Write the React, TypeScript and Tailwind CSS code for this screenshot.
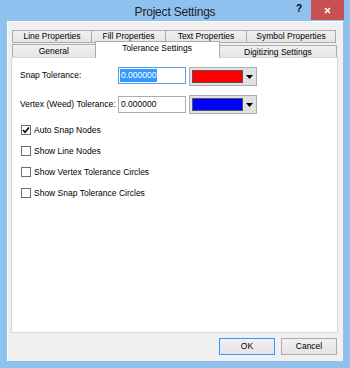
import React from "react";

const font = { fontFamily: '"Liberation Sans", Arial, sans-serif' };

function Tab({ label, w, h, selected, className = "" }: { label: string; w: string; h: string; selected?: boolean; className?: string }) {
  return (
    <div
      className={`${w} ${h} flex items-center justify-center text-[8.5px] leading-none text-black border border-[#acacac] ${
        selected ? "bg-white border-b-0 relative z-10" : "bg-gradient-to-b from-[#f0f0f0] to-[#e5e5e5]"
      } ${className}`}
    >
      {label}
    </div>
  );
}

function ColorPick({ color }: { color: string }) {
  return (
    <div className="w-[68px] h-[19px] border border-[#adadad] bg-[#e1e1e1] flex items-center pl-[2px] pr-[3px] gap-[3px]">
      <div className={`flex-1 h-[13px] border border-[#555] ${color}`} />
      <svg width="7" height="4" viewBox="0 0 7 4">
        <path d="M0 0 H7 L3.5 4 Z" fill="#000" />
      </svg>
    </div>
  );
}

function Check({ label, checked }: { label: string; checked?: boolean }) {
  return (
    <div className="flex items-center gap-[3px] h-[10px]">
      <div className="w-[10px] h-[10px] border border-[#707070] bg-white flex items-center justify-center">
        {checked && (
          <svg width="8" height="8" viewBox="0 0 8 8">
            <path d="M1 4 L3 6.3 L7 1.5" stroke="#000" strokeWidth="1.6" fill="none" />
          </svg>
        )}
      </div>
      <span className="text-[8.5px] leading-none text-black">{label}</span>
    </div>
  );
}

export default function App() {
  return (
    <div style={font} className="w-[350px] h-[368px] bg-[#8ec1f0] flex flex-col">
      <div className="h-[22px] grid grid-cols-[1fr_auto_1fr] items-start">
        <div />
        <div className="text-[12px] tracking-[-0.2px] leading-none text-[#222] pt-[6px]">Project Settings</div>
        <div className="flex justify-end pr-[6px] items-start">
          <div className="text-[10px] font-bold text-black pt-[4px] pr-[9px] leading-none">?</div>
          <div className="w-[33px] h-[20px] bg-[#c75050] flex items-center justify-center">
            <svg width="7" height="7" viewBox="0 0 7 7">
              <path d="M1 1 L6 6 M6 1 L1 6" stroke="#fff" strokeWidth="1.6" />
            </svg>
          </div>
        </div>
      </div>
      <div className="mx-[7px] mb-[7px] flex-1 bg-[#f0f0f0] border-l border-t border-[#fdfdfd] flex flex-col pt-[8px] pl-[3px] pr-[6px] pb-[6px]">
        <div className="flex flex-col pl-[1px]">
          <div className="flex">
            <Tab label="Line Properties" w="w-[80px]" h="h-[13px]" />
            <Tab label="Fill Properties" w="w-[75px]" h="h-[13px]" className="-ml-px" />
            <Tab label="Text Properties" w="w-[82px]" h="h-[13px]" className="-ml-px" />
            <Tab label="Symbol Properties" w="w-[90px]" h="h-[13px]" className="-ml-px" />
          </div>
          <div className="flex items-end -mt-[2px]">
            <Tab label="General" w="w-[84px]" h="h-[14px]" className="border-b-0 -mt-px" />
            <Tab label="Tolerance Settings" w="w-[126px]" h="h-[17px]" selected className="-ml-px items-start pt-[2px]" />
            <Tab label="Digitizing Settings" w="w-[119px]" h="h-[13px]" className="-ml-px border-b-0" />
          </div>
        </div>
        <div className="w-[327px] h-[276px] bg-white border border-[#d9d9d9] -mt-px flex flex-col pl-[8px] pt-[9px]">
          <div className="flex items-start">
            <div className="w-[98px] text-[8.5px] leading-none pt-[4px] text-black">Snap Tolerance:</div>
            <div className="w-[68px] h-[17px] border border-[#569de5] bg-white flex items-center pl-[1px]">
              <span className="bg-[#3399ff] text-white text-[8.5px] leading-none px-px py-[2px]">0.000000</span>
            </div>
            <div className="ml-[3px]">
              <ColorPick color="bg-[#ff0000]" />
            </div>
          </div>
          <div className="flex items-start mt-[9px]">
            <div className="w-[98px] text-[8.5px] leading-none pt-[5px] text-black">Vertex (Weed) Tolerance:</div>
            <div className="w-[68px] h-[17px] mt-px border border-[#abadb3] bg-white flex items-center pl-[2px]">
              <span className="text-black text-[8.5px] leading-none">0.000000</span>
            </div>
            <div className="ml-[3px]">
              <ColorPick color="bg-[#0000ff]" />
            </div>
          </div>
          <div className="flex flex-col gap-[11px] mt-[11px] pl-px">
            <Check label="Auto Snap Nodes" checked />
            <Check label="Show Line Nodes" />
            <Check label="Show Vertex Tolerance Circles" />
            <Check label="Show Snap Tolerance Circles" />
          </div>
        </div>
        <div className="flex justify-end gap-[6px] mt-[5px]">
          <div className="w-[56px] h-[17px] border border-[#3399ff] bg-gradient-to-b from-[#f0f0f0] to-[#e5e5e5] flex items-center justify-center text-[8.5px] leading-none text-black">
            OK
          </div>
          <div className="w-[56px] h-[17px] border border-[#acacac] bg-gradient-to-b from-[#f0f0f0] to-[#e5e5e5] flex items-center justify-center text-[8.5px] leading-none text-black">
            Cancel
          </div>
        </div>
      </div>
    </div>
  );
}
